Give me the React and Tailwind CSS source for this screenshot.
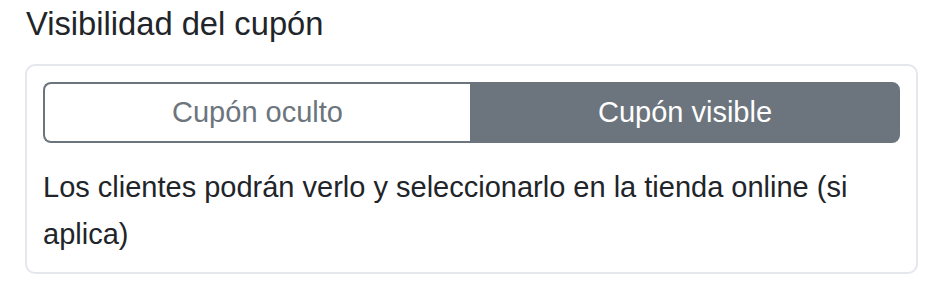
export default function App() {
  const visible = true;

  return (
    <div
      className="min-h-screen bg-white pl-[25px] pr-[24px] pt-[4px] text-[#212529]"
      style={{ fontFamily: '"Liberation Sans", Arial, sans-serif' }}
    >
      <h2 className="ml-[1px] text-[32.7px] leading-[39px] font-normal mb-[21px]">
        Visibilidad del cupón
      </h2>

      <div className="rounded-[10px] border-2 border-[#e4e7eb] px-[16px] pt-[16px] pb-[14px]">
        <div className="flex h-[61px] w-full">
          <button
            className={
              visible
                ? 'w-[427px] rounded-l-[8px] border-2 border-r-0 border-[#6c757d] bg-white text-[29px] text-[#6c757d]'
                : 'w-[427px] rounded-l-[8px] border-2 border-[#6c757d] bg-[#6c757d] text-[29px] text-white'
            }
          >
            Cupón oculto
          </button>
          <button
            className={
              visible
                ? 'flex-1 rounded-r-[8px] border-2 border-[#6c757d] bg-[#6c757d] text-[29px] text-white'
                : 'flex-1 rounded-r-[8px] border-2 border-l-0 border-[#6c757d] bg-white text-[29px] text-[#6c757d]'
            }
          >
            Cupón visible
          </button>
        </div>
        <p className="mt-[21px] text-[29px] leading-[47px]">
          Los clientes podrán verlo y seleccionarlo en la tienda online (si aplica)
        </p>
      </div>
    </div>
  );
}
